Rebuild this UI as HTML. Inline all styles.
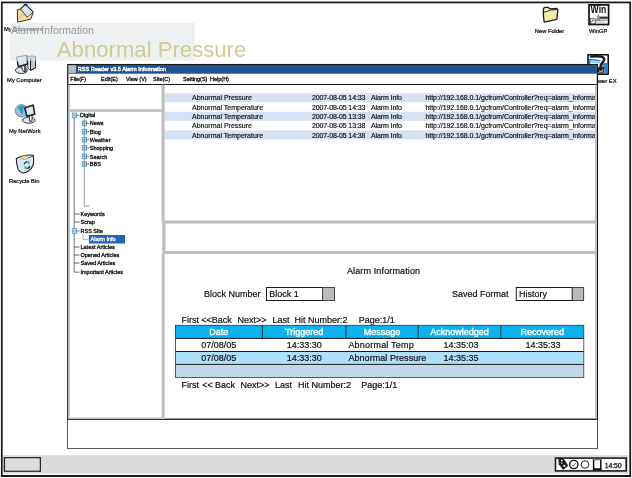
<!DOCTYPE html>
<html><head><meta charset="utf-8"><title>RSS Reader v3.5 Alarm Information</title>
<style>
html,body{margin:0;padding:0;background:#fff;}
body{width:632px;height:478px;overflow:hidden;}
svg{display:block;font-family:"Liberation Sans",sans-serif;will-change:transform;transform:translateZ(0);}
text{white-space:pre;}
</style></head><body>
<svg width="632" height="478" viewBox="0 0 632 478">

<rect x="1.8" y="2.43" width="628.4" height="473.5" fill="#fff" stroke="#1a1a1a" stroke-width="1.75"/>
<path d="M0.9 475.95H631.1" stroke="#1a1a1a" stroke-width="2.05"/>
<rect x="3" y="455.1" width="625.4" height="18.5" fill="#dbdbdb"/>
<rect x="4.5" y="457.8" width="35.7" height="13.3" fill="#dbdbdb" stroke="#1a1a1a" stroke-width="1.45"/>
<rect x="5.5" y="458.8" width="33.7" height="11.3" fill="none" stroke="#ececec" stroke-width="0.6"/>
<rect x="555.5" y="458.1" width="70.7" height="12.8" fill="#fff" stroke="#1a1a1a" stroke-width="1.6"/>
<text x="604.7" y="467.9" font-size="6.9" fill="#111" stroke="#111" stroke-width="0.25" textLength="16.9" lengthAdjust="spacing">14:50</text>
<g id="tray" fill="none" stroke="#111"><path d="M559.1 458.1 L563.4 459 L564.7 460.6 L567.8 465.8 L563.3 469.4 L559.7 465 Z" stroke-width="0.7" fill="#1c1c1c"/><path d="M559.1 458V465" stroke-width="0.9"/><circle cx="561.8" cy="460.6" r="0.9" fill="#fff" stroke="none"/><rect x="561" y="462.6" width="1.6" height="1" fill="#ddd" stroke="none"/><circle cx="564.3" cy="465.8" r="1.1" fill="#fff" stroke="none"/><circle cx="573.8" cy="464.5" r="4.15" stroke-width="1.35" fill="#fff"/><path d="M572.2 465.1l1.1 1 2.5-3.2" stroke-width="0.7"/><circle cx="585" cy="464.5" r="3.8" stroke-width="0.9" fill="#fff"/><rect x="593.6" y="459.4" width="7.2" height="9.6" stroke-width="1.5" fill="#fff"/><path d="M592.9 469.7h8.6" stroke-width="1.3"/><path d="M592.9 459.2h8.6" stroke="#8a8a8a" stroke-width="1.2"/></g>
<text x="4" y="31.4" font-size="5.75" fill="#111" stroke="#111" stroke-width="0.24" text-anchor="start" >My Documents</text>
<text x="7.1" y="82.3" font-size="5.75" fill="#111" stroke="#111" stroke-width="0.24" text-anchor="start" >My Computer</text>
<text x="9" y="133" font-size="5.75" fill="#111" stroke="#111" stroke-width="0.24" text-anchor="start" >My NetWork</text>
<text x="9" y="183" font-size="5.75" fill="#111" stroke="#111" stroke-width="0.24" text-anchor="start" >Recycle Bin</text>
<text x="534.8" y="33" font-size="5.75" fill="#111" stroke="#111" stroke-width="0.24" text-anchor="start" >New Folder</text>
<text x="589" y="33" font-size="5.75" fill="#111" stroke="#111" stroke-width="0.24" text-anchor="start" >WinGP</text>
<text x="616.5" y="83.2" font-size="5.75" fill="#111" stroke="#111" stroke-width="0.24" text-anchor="end" >Viewer EX</text>
<g id="mail" stroke-linejoin="round"><path d="M20.5 9 L33.3 12.2 L27.2 17.2 Z" fill="#ece9d0"/><path d="M25.4 4.4 L20.4 9 L25.6 13.6 L31.4 12.4 L33.1 11.7 Z" fill="#d9ebf9"/><path d="M17.3 9.6 L20.6 9.2 L27.2 17.2 L33.3 12.2 L30.7 19.2 L17.6 22.2 Z" fill="#fbdba1" stroke="#222" stroke-width="0.9"/><path d="M20.4 9 L25.4 4.4 L33.2 11.8" fill="none" stroke="#222" stroke-width="1.1"/><path d="M23.7 4.6H27.4" stroke="#222" stroke-width="1.3"/><path d="M25.6 13.5 L31.4 12.4" stroke="#bbb" stroke-width="0.5"/><path d="M17.8 21.8 L21.2 14.4 L25.2 15.6 M27.4 17.4 L30.6 14.8" fill="none" stroke="#b9a987" stroke-width="0.7"/></g>
<g id="mycomp" stroke="#222" stroke-width="0.9" stroke-linejoin="round"><ellipse cx="21.4" cy="70.3" rx="6" ry="3.2" fill="#d6e7f6"/><path d="M27 56.6 L32 55.9 L35.6 56.5 L35.4 68 L30.6 70.3 L28 68.4 Z" fill="#dbe8f5" stroke="#333" stroke-width="0.9"/><path d="M27 56.6 L30.6 58.2 L35.6 56.5" fill="none" stroke="#666" stroke-width="0.6"/><path d="M30.6 58.4 V70.3" fill="none" stroke-width="1.2"/><path d="M33.1 58 V69" fill="none" stroke="#8d99a6" stroke-width="0.7"/><path d="M35.5 57 L35.3 68 L30.6 70.3" fill="none" stroke-width="0.9"/><path d="M21 66.3 L25.8 65 L25.8 72 L23.4 71.6 Z" fill="#d6e7f6"/><path d="M24.6 65.6 V71.8" fill="none" stroke-width="0.8"/><path d="M16.5 57 L26.8 55.3 L27.7 63.8 L18.3 66.6 Z" fill="#d6e7f6" stroke="#333" stroke-width="0.9"/><path d="M26.8 55.5 L27.7 63.8 L18.3 66.6 L17.4 62" fill="none" stroke-width="1.3"/></g>
<g id="mynet" stroke="#222" stroke-linejoin="round"><circle cx="21.5" cy="110.8" r="6.2" fill="#a9bbe4" stroke="#667" stroke-width="0.7"/><path d="M17.8 108.5 Q18.6 106.2 20.5 105.6 Q22.8 105.2 24.6 106.6 L22.8 109 L23.3 111.8 L21.8 115.3 L20.8 112.8 L19.8 110.5 Z" fill="#1ba0c6" stroke="none"/><ellipse cx="28.8" cy="120.2" rx="6.3" ry="3" fill="#dde9f5" stroke-width="0.9"/><path d="M29.4 115.6 L32.2 115 L32 121.2 L29.4 121 Z" fill="#f4f8fc" stroke-width="0.9"/><path d="M24.7 108 L33.2 105.1 L34.8 114.3 L27 116.2 Z" fill="#d6e9f7" stroke-width="1.6"/></g>
<g id="bin" stroke="#222" stroke-width="1.1" stroke-linejoin="round"><path d="M16.3 158.6 Q24 154.2 33.2 155.2 Q34.2 160 33.3 164.5 Q32 168.6 28.5 171 Q25.8 172.8 23 173 Q20.2 172.4 18.5 170 Q16.6 166 16.3 158.6Z" fill="#d5e8f8"/><path d="M19.8 157.6 Q23 155.8 26.5 155.6 Q28.2 156.4 28.7 157.8 Q27 159.4 24.2 159.4 Q21.4 159.2 19.8 157.6Z" fill="#f3dcae" stroke="#8d8470" stroke-width="0.5"/><path d="M28.7 157.8 Q31.4 157 33 155.6" fill="none" stroke-width="0.7"/><path d="M24.2 164.4 Q24.6 162.2 27 161.6 M29.8 166 Q29.4 168 27.2 168.6" fill="none" stroke-width="1.3"/><path d="M27 161 L29.8 161.6 L29.2 164.6 L27.4 163.6Z M24.4 166.2 L26.4 166.6 L27 169.2 L24.6 168.8Z" fill="#3cb464" stroke="none"/></g>
<g id="folder" stroke="#1c1c1c" stroke-width="1.3" stroke-linejoin="round"><path d="M543.5 8.8 Q544 7.4 545 7.3 L548 7.3 L549.8 8.8 L556.8 8.5 Q557.9 9.2 557.8 10.5 L556.8 19.3 L544.2 22.1 Q543.3 17 543.3 12 Z" fill="#f5eaa8"/><path d="M543.6 12.3 L547.5 11.3 L550.5 10 L556.8 9.6" fill="none" stroke-width="0.9"/></g>
<g id="wingp"><rect x="589" y="4.9" width="19.6" height="19.6" fill="#fff" stroke="#111" stroke-width="1.7"/><path d="M596.5 17 L598.5 14 L600 17 L600 21 L596.5 21Z" fill="#999"/><rect x="599.6" y="16.6" width="8.2" height="2.2" fill="#333"/><rect x="596" y="19.6" width="11.6" height="1.2" fill="#888"/><rect x="596" y="21.6" width="9" height="0.8" fill="#aaa"/><rect x="590.2" y="18.8" width="5" height="5" fill="#fff" stroke="#111" stroke-width="0.7"/><path d="M591.5 22.5 Q591.5 20.5 593.8 20.4" fill="none" stroke="#111" stroke-width="0.8"/><text x="590.6" y="13.4" font-size="10.4" font-weight="bold" fill="#111" textLength="15.8" lengthAdjust="spacingAndGlyphs">Win</text></g>
<g id="viewer" stroke-linejoin="round" stroke-linecap="round"><rect x="588" y="54.8" width="20.2" height="19.3" fill="#fff" stroke="#111" stroke-width="1.6"/><path d="M589.7 66 V59.4 L600.4 60.7" fill="none" stroke="#1e88de" stroke-width="1.5" stroke-linecap="butt"/><path d="M591 61.9 L599.5 62.7" fill="none" stroke="#1e88de" stroke-width="0.7"/><path d="M602.4 63.6 L607.4 62.8 L607.4 73.3 L604.4 73.3 L604.4 65.6 L602 66.2Z" fill="#1e88de"/><path d="M597.6 67.4 L604.8 66.2 L603.8 72.9 L598 72.5Z" fill="#2a2a2a"/><path d="M599.2 69.6 L603 69 L602.6 72.2 L599.2 71.8Z" fill="#a0a0a0"/><path d="M591 56.5 Q598 55.7 602.2 56.9 Q605.6 58.6 603.2 61.6 Q600.2 64.6 600.3 67.5 L600.8 69.6" fill="none" stroke="#1a1a1a" stroke-width="2.5"/></g>
<rect x="10.2" y="22.8" width="184.6" height="37.8" fill="#e3e7e7" fill-opacity="0.6"/>
<text x="11" y="33.7" font-size="10.5" fill="#96989a">Alarm Information</text>
<text x="56.8" y="56.7" font-size="22.15" fill="#d2cb93">Abnormal Pressure</text>
<rect x="67.5" y="419" width="530" height="29.5" fill="#fff" stroke="#4a4a4a" stroke-width="0.9"/>
<rect x="67.8" y="64.6" width="529.6" height="354.6" fill="#fff" stroke="#1a1a1a" stroke-width="1.3"/>
<rect x="68.3" y="65" width="528.6" height="8.7" fill="#20528f"/>
<rect x="68.5" y="65.2" width="7.4" height="7.7" fill="#bdbdbd"/>
<text x="77.7" y="71.4" font-size="5.6" fill="#fff" stroke="#fff" stroke-width="0.4" textLength="88.3" lengthAdjust="spacing">RSS Reader v3.5 Alarm Information</text>
<text x="70.3" y="81.3" font-size="5.5" fill="#111" stroke="#111" stroke-width="0.3">File(F)</text>
<text x="101" y="81.3" font-size="5.5" fill="#111" stroke="#111" stroke-width="0.3">Edit(E)</text>
<text x="126" y="81.3" font-size="5.5" fill="#111" stroke="#111" stroke-width="0.3">View (V)</text>
<text x="153" y="81.3" font-size="5.5" fill="#111" stroke="#111" stroke-width="0.3">Site(C)</text>
<text x="183" y="81.3" font-size="5.5" fill="#111" stroke="#111" stroke-width="0.3">Setting(S)</text>
<text x="210" y="81.3" font-size="5.5" fill="#111" stroke="#111" stroke-width="0.3">Help(H)</text>
<path d="M68 84.45H597.4" stroke="#1a1a1a" stroke-width="1.1"/>
<rect x="161.5" y="84.7" width="3.2" height="137" fill="#bcbec0"/>
<rect x="162.2" y="221" width="3.3" height="33" fill="#bcbec0"/>
<rect x="161.7" y="253.9" width="2.95" height="164.6" fill="#bcbec0"/>
<rect x="68.4" y="84.7" width="1.4" height="333.8" fill="#bcbec0"/>
<rect x="68.4" y="109.3" width="94" height="2.6" fill="#bcbec0"/>
<rect x="68.4" y="417.2" width="96.7" height="1.5" fill="#d2d4d6"/>
<rect x="165" y="220.5" width="432" height="3.1" fill="#bcbec0"/>
<rect x="165" y="250.9" width="432" height="3" fill="#bcbec0"/>
<rect x="595.1" y="84.7" width="1.7" height="334" fill="#bcbec0"/>
<clipPath id="lc"><rect x="165" y="85" width="429.8" height="135"/></clipPath><g clip-path="url(#lc)">
<rect x="165" y="93.2" width="430" height="9" fill="#d6e2f3"/>
<text x="192" y="100" font-size="7" fill="#111" stroke="#111" stroke-width="0.18">Abnormal Pressure</text>
<text x="312" y="100" font-size="7" fill="#111" stroke="#111" stroke-width="0.18" textLength="53.4" lengthAdjust="spacing">2007-08-05 14:33</text>
<text x="371" y="100" font-size="7" fill="#111" stroke="#111" stroke-width="0.18" textLength="31" lengthAdjust="spacing">Alarm Info</text>
<text x="425.5" y="100" font-size="7" fill="#111" stroke="#111" stroke-width="0.18" textLength="181.3" lengthAdjust="spacing">http://192.168.0.1/gcfrom/Controller?req=alarm_information</text>
<text x="192" y="110" font-size="7" fill="#111" stroke="#111" stroke-width="0.18">Abnormal Temperature</text>
<text x="312" y="110" font-size="7" fill="#111" stroke="#111" stroke-width="0.18" textLength="53.4" lengthAdjust="spacing">2007-08-05 14:33</text>
<text x="371" y="110" font-size="7" fill="#111" stroke="#111" stroke-width="0.18" textLength="31" lengthAdjust="spacing">Alarm Info</text>
<text x="425.5" y="110" font-size="7" fill="#111" stroke="#111" stroke-width="0.18" textLength="181.3" lengthAdjust="spacing">http://192.168.0.1/gcfrom/Controller?req=alarm_information</text>
<rect x="165" y="111.8" width="430" height="9" fill="#d6e2f3"/>
<text x="192" y="119" font-size="7" fill="#111" stroke="#111" stroke-width="0.18">Abnormal Temperature</text>
<text x="312" y="119" font-size="7" fill="#111" stroke="#111" stroke-width="0.18" textLength="53.4" lengthAdjust="spacing">2007-08-05 13:39</text>
<text x="371" y="119" font-size="7" fill="#111" stroke="#111" stroke-width="0.18" textLength="31" lengthAdjust="spacing">Alarm Info</text>
<text x="425.5" y="119" font-size="7" fill="#111" stroke="#111" stroke-width="0.18" textLength="181.3" lengthAdjust="spacing">http://192.168.0.1/gcfrom/Controller?req=alarm_information</text>
<text x="192" y="128" font-size="7" fill="#111" stroke="#111" stroke-width="0.18">Abnormal Pressure</text>
<text x="312" y="128" font-size="7" fill="#111" stroke="#111" stroke-width="0.18" textLength="53.4" lengthAdjust="spacing">2007-08-05 13:38</text>
<text x="371" y="128" font-size="7" fill="#111" stroke="#111" stroke-width="0.18" textLength="31" lengthAdjust="spacing">Alarm Info</text>
<text x="425.5" y="128" font-size="7" fill="#111" stroke="#111" stroke-width="0.18" textLength="181.3" lengthAdjust="spacing">http://192.168.0.1/gcfrom/Controller?req=alarm_information</text>
<rect x="165" y="130.4" width="430" height="9" fill="#d6e2f3"/>
<text x="192" y="138" font-size="7" fill="#111" stroke="#111" stroke-width="0.18">Abnormal Temperature</text>
<text x="312" y="138" font-size="7" fill="#111" stroke="#111" stroke-width="0.18" textLength="53.4" lengthAdjust="spacing">2007-08-05 14:38</text>
<text x="371" y="138" font-size="7" fill="#111" stroke="#111" stroke-width="0.18" textLength="31" lengthAdjust="spacing">Alarm Info</text>
<text x="425.5" y="138" font-size="7" fill="#111" stroke="#111" stroke-width="0.18" textLength="181.3" lengthAdjust="spacing">http://192.168.0.1/gcfrom/Controller?req=alarm_information</text>
</g>
<rect x="72.3" y="113.10000000000001" width="4.2" height="4.6" fill="#d9dde2" stroke="#3f9fe3" stroke-width="0.9"/><path d="M73.10000000000001 115.4H75.5" stroke="#8a8f96" stroke-width="0.8"/>
<rect x="82.39999999999999" y="121.0" width="4.2" height="4.6" fill="#d9dde2" stroke="#3f9fe3" stroke-width="0.9"/><path d="M83.2 123.3H85.6" stroke="#8a8f96" stroke-width="0.8"/>
<rect x="82.39999999999999" y="129.39999999999998" width="4.2" height="4.6" fill="#d9dde2" stroke="#3f9fe3" stroke-width="0.9"/><path d="M83.2 131.7H85.6" stroke="#8a8f96" stroke-width="0.8"/>
<rect x="82.39999999999999" y="137.39999999999998" width="4.2" height="4.6" fill="#d9dde2" stroke="#3f9fe3" stroke-width="0.9"/><path d="M83.2 139.7H85.6" stroke="#8a8f96" stroke-width="0.8"/>
<rect x="82.39999999999999" y="145.5" width="4.2" height="4.6" fill="#d9dde2" stroke="#3f9fe3" stroke-width="0.9"/><path d="M83.2 147.8H85.6" stroke="#8a8f96" stroke-width="0.8"/>
<rect x="82.39999999999999" y="154.0" width="4.2" height="4.6" fill="#d9dde2" stroke="#3f9fe3" stroke-width="0.9"/><path d="M83.2 156.3H85.6" stroke="#8a8f96" stroke-width="0.8"/>
<rect x="82.39999999999999" y="161.7" width="4.2" height="4.6" fill="#d9dde2" stroke="#3f9fe3" stroke-width="0.9"/><path d="M83.2 164H85.6" stroke="#8a8f96" stroke-width="0.8"/>
<rect x="72.3" y="228.7" width="4.2" height="4.6" fill="#d9dde2" stroke="#3f9fe3" stroke-width="0.9"/><path d="M73.10000000000001 231H75.5" stroke="#8a8f96" stroke-width="0.8"/>
<g stroke="#4a4a4a" stroke-width="0.75" fill="none"><path d="M74.2 118V228.6M74.2 233.4V272.2H79.5"/><path d="M84.3 119V206H89.3" stroke="#777"/><path d="M76.4 115.4H79.5"/>
<path d="M86 123.3H89.3"/>
<path d="M86 131.7H89.3"/>
<path d="M86 139.7H89.3"/>
<path d="M86 147.8H89.3"/>
<path d="M86 156.3H89.3"/>
<path d="M86 164H89.3"/>
<path d="M74.2 214H79.5" stroke-width="1" stroke="#5a5a5a"/>
<path d="M74.2 222H79.5" stroke-width="1" stroke="#5a5a5a"/>
<path d="M74.2 247H79.5" stroke-width="1" stroke="#5a5a5a"/>
<path d="M74.2 255H79.5" stroke-width="1" stroke="#5a5a5a"/>
<path d="M74.2 263H79.5" stroke-width="1" stroke="#5a5a5a"/>
<path d="M76.5 231H79.5"/><path d="M83 234V239.6H88.6" stroke="#999"/>
</g>
<text x="80" y="117.4" font-size="5.5" fill="#111" stroke="#111" stroke-width="0.3">Digital</text>
<text x="89.8" y="125.3" font-size="5.5" fill="#111" stroke="#111" stroke-width="0.3">News</text>
<text x="89.8" y="133.7" font-size="5.5" fill="#111" stroke="#111" stroke-width="0.3">Blog</text>
<text x="89.8" y="141.7" font-size="5.5" fill="#111" stroke="#111" stroke-width="0.3">Weather</text>
<text x="89.8" y="149.8" font-size="5.5" fill="#111" stroke="#111" stroke-width="0.3">Shopping</text>
<text x="89.8" y="159.0" font-size="5.5" fill="#111" stroke="#111" stroke-width="0.3">Search</text>
<text x="89.8" y="166" font-size="5.5" fill="#111" stroke="#111" stroke-width="0.3">BBS</text>
<text x="80.5" y="216" font-size="5.5" fill="#111" stroke="#111" stroke-width="0.3">Keywords</text>
<text x="80.5" y="224" font-size="5.5" fill="#111" stroke="#111" stroke-width="0.3">Scrap</text>
<text x="80.5" y="233" font-size="5.5" fill="#111" stroke="#111" stroke-width="0.3">RSS Site</text>
<rect x="88.9" y="235" width="36.1" height="8.5" fill="#1f63b5"/>
<text x="90.5" y="241.2" font-size="5.5" fill="#fff" stroke="#fff" stroke-width="0.3">Alarm Info</text>
<text x="80.5" y="249" font-size="5.5" fill="#111" stroke="#111" stroke-width="0.3">Latest Articles</text>
<text x="80.5" y="257" font-size="5.5" fill="#111" stroke="#111" stroke-width="0.3">Opened Articles</text>
<text x="80.5" y="265" font-size="5.5" fill="#111" stroke="#111" stroke-width="0.3">Saved Articles</text>
<text x="80.5" y="274" font-size="5.5" fill="#111" stroke="#111" stroke-width="0.3">Important Articles</text>
<text x="346.9" y="274.3" font-size="9" fill="#111" stroke="#111" stroke-width="0.2" text-anchor="start" textLength="73.2" lengthAdjust="spacing">Alarm Information</text>
<text x="204" y="297.4" font-size="9" fill="#111" stroke="#111" stroke-width="0.2" text-anchor="start" >Block Number</text>
<rect x="266.5" y="287.5" width="56" height="13" fill="#fff" stroke="#1a1a1a" stroke-width="1"/>
<rect x="322.5" y="287.5" width="12" height="13" fill="#bababa" stroke="#444" stroke-width="1"/>
<text x="269.2" y="297.4" font-size="9" fill="#111" stroke="#111" stroke-width="0.2" text-anchor="start" >Block 1</text>
<text x="452" y="297.4" font-size="9" fill="#111" stroke="#111" stroke-width="0.2" text-anchor="start" >Saved Format</text>
<rect x="516.3" y="287.5" width="56" height="13" fill="#fff" stroke="#1a1a1a" stroke-width="1"/>
<rect x="572.3" y="287.5" width="11.3" height="13" fill="#bababa" stroke="#444" stroke-width="1"/>
<text x="519" y="297.4" font-size="9" fill="#111" stroke="#111" stroke-width="0.2" text-anchor="start" >History</text>
<text y="322.8" font-size="9" fill="#111" stroke="#111" stroke-width="0.2"><tspan x="181.5">First</tspan> <tspan x="201.2">&lt;&lt;Back</tspan> <tspan x="237.6">Next&gt;&gt;</tspan> <tspan x="272.5">Last</tspan> <tspan x="294.4">Hit Number:2</tspan> <tspan x="358.8">Page:1/1</tspan></text>
<text y="387.7" font-size="9" fill="#111" stroke="#111" stroke-width="0.2"><tspan x="181.5">First</tspan> <tspan x="202.3">&lt;&lt;</tspan> <tspan x="215">Back</tspan> <tspan x="240.5">Next&gt;&gt;</tspan> <tspan x="275">Last</tspan> <tspan x="298">Hit Number:2</tspan> <tspan x="361.3">Page:1/1</tspan></text>
<rect x="175.4" y="325.3" width="408.4" height="13.1" fill="#0ab2f0"/>
<rect x="175.4" y="338.4" width="408.4" height="13.1" fill="#fff"/>
<rect x="175.4" y="351.5" width="408.4" height="12.9" fill="#afe0fa"/>
<rect x="175.4" y="364.4" width="408.4" height="13.1" fill="#c3d8e4"/>
<g stroke="#1a1a1a" stroke-width="1" fill="none"><rect x="175.4" y="325.3" width="408.4" height="52.2" stroke-width="0.8" stroke="#2a3a44"/><path d="M175.4 338.4H583.8M175.4 351.5H583.8M175.4 364.4H583.8"/><path stroke-width="0.9" d="M262.4 325.6V338.4M346 325.6V338.4M418.2 325.6V338.4M500.8 325.6V338.4"/></g>
<text x="218.7" y="335.2" font-size="9" fill="#fff" stroke="#fff" stroke-width="0.35" text-anchor="middle">Date</text>
<text x="304.2" y="335.2" font-size="9" fill="#fff" stroke="#fff" stroke-width="0.35" text-anchor="middle">Triggered</text>
<text x="382" y="335.2" font-size="9" fill="#fff" stroke="#fff" stroke-width="0.35" text-anchor="middle">Message</text>
<text x="459.5" y="335.2" font-size="9" fill="#fff" stroke="#fff" stroke-width="0.35" text-anchor="middle">Acknowledged</text>
<text x="542.3" y="335.2" font-size="9" fill="#fff" stroke="#fff" stroke-width="0.35" text-anchor="middle">Recovered</text>
<text x="218.7" y="348.2" font-size="9" fill="#111" stroke="#111" stroke-width="0.2" text-anchor="middle" >07/08/05</text>
<text x="304.2" y="348.2" font-size="9" fill="#111" stroke="#111" stroke-width="0.2" text-anchor="middle" >14:33:30</text>
<text x="348.4" y="348.2" font-size="9" fill="#111" stroke="#111" stroke-width="0.2" text-anchor="start" textLength="65.3" lengthAdjust="spacing">Abnormal Temp</text>
<text x="461" y="348.2" font-size="9" fill="#111" stroke="#111" stroke-width="0.2" text-anchor="middle" >14:35:03</text>
<text x="543" y="348.2" font-size="9" fill="#111" stroke="#111" stroke-width="0.2" text-anchor="middle" >14:35:33</text>
<text x="218.7" y="361.4" font-size="9" fill="#111" stroke="#111" stroke-width="0.2" text-anchor="middle" >07/08/05</text>
<text x="304.2" y="361.4" font-size="9" fill="#111" stroke="#111" stroke-width="0.2" text-anchor="middle" >14:33:30</text>
<text x="348.4" y="361.4" font-size="9" fill="#111" stroke="#111" stroke-width="0.2" text-anchor="start" textLength="77.9" lengthAdjust="spacing">Abnormal Pressure</text>
<text x="461" y="361.4" font-size="9" fill="#111" stroke="#111" stroke-width="0.2" text-anchor="middle" >14:35:35</text>
</svg></body></html>
